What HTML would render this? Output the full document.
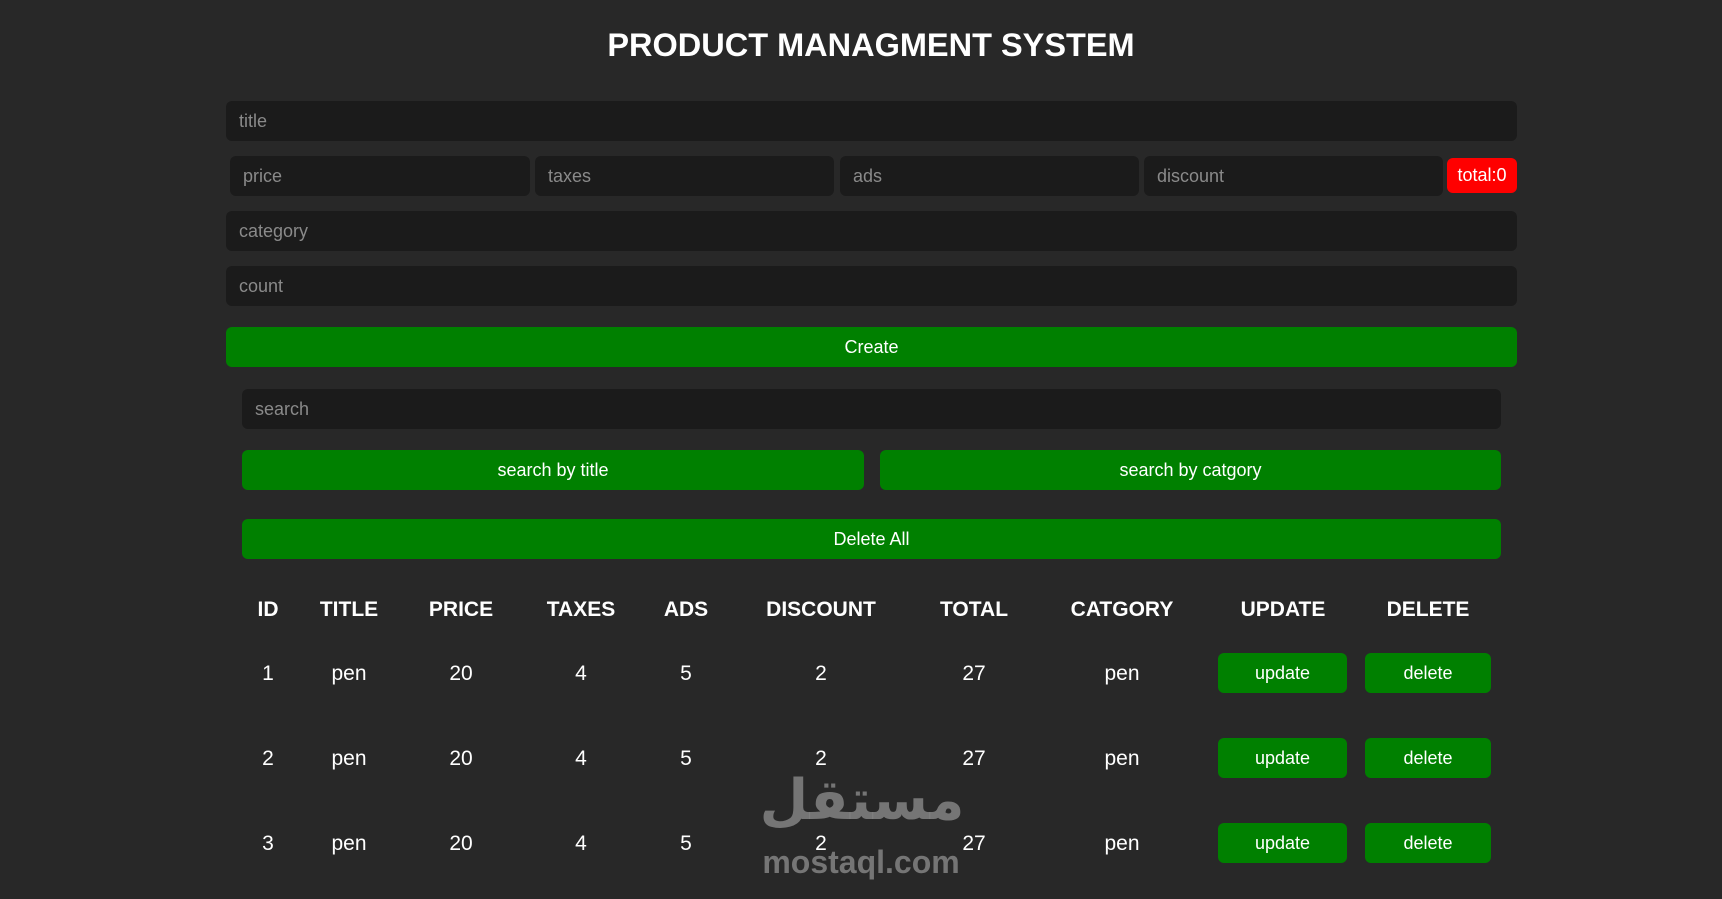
<!DOCTYPE html>
<html><head><meta charset="utf-8"><style>
body{margin:0;width:1722px;height:899px;background:#282828;font-family:"Liberation Sans",Arial,sans-serif;position:relative;overflow:hidden;color:#fff}
.a{position:absolute;box-sizing:border-box}
.in{background:#1b1b1b;border-radius:6px;color:#8a8a8a;font-size:18px;padding-left:13px;display:flex;align-items:center}
.btn{background:#008000;border-radius:6px;color:#fff;font-size:18px;display:flex;align-items:center;justify-content:center}
.c{position:absolute;transform:translateX(-50%);font-size:21px;white-space:nowrap}
.h{font-weight:bold;font-size:21px}
</style></head><body>
<div class="a" style="left:10px;width:1722px;top:27px;text-align:center;font-weight:bold;font-size:32.5px">PRODUCT MANAGMENT SYSTEM</div>
<div class="a in" style="left:226px;width:1291px;top:101px;height:40px">title</div>
<div class="a in" style="left:230px;width:300px;top:156px;height:40px">price</div>
<div class="a in" style="left:535px;width:299px;top:156px;height:40px">taxes</div>
<div class="a in" style="left:840px;width:299px;top:156px;height:40px">ads</div>
<div class="a in" style="left:1144px;width:299px;top:156px;height:40px">discount</div>
<div class="a btn" style="left:1447px;width:70px;top:158px;height:35px;background:#f00;font-size:18px">total:0</div>
<div class="a in" style="left:226px;width:1291px;top:211px;height:40px">category</div>
<div class="a in" style="left:226px;width:1291px;top:266px;height:40px">count</div>
<div class="a btn" style="left:226px;width:1291px;top:327px;height:40px">Create</div>
<div class="a in" style="left:242px;width:1259px;top:389px;height:40px">search</div>
<div class="a btn" style="left:242px;width:622px;top:450px;height:40px">search by title</div>
<div class="a btn" style="left:880px;width:621px;top:450px;height:40px">search by catgory</div>
<div class="a btn" style="left:242px;width:1259px;top:519px;height:40px">Delete All</div>
<div class="c h" style="left:268px;top:598px">ID</div>
<div class="c h" style="left:349px;top:598px">TITLE</div>
<div class="c h" style="left:461px;top:598px">PRICE</div>
<div class="c h" style="left:581px;top:598px">TAXES</div>
<div class="c h" style="left:686px;top:598px">ADS</div>
<div class="c h" style="left:821px;top:598px">DISCOUNT</div>
<div class="c h" style="left:974px;top:598px">TOTAL</div>
<div class="c h" style="left:1122px;top:598px">CATGORY</div>
<div class="c h" style="left:1283px;top:598px">UPDATE</div>
<div class="c h" style="left:1428px;top:598px">DELETE</div>
<div class="c" style="left:268px;top:662px">1</div><div class="c" style="left:349px;top:662px">pen</div><div class="c" style="left:461px;top:662px">20</div><div class="c" style="left:581px;top:662px">4</div><div class="c" style="left:686px;top:662px">5</div><div class="c" style="left:821px;top:662px">2</div><div class="c" style="left:974px;top:662px">27</div><div class="c" style="left:1122px;top:662px">pen</div>
<div class="a btn" style="left:1218px;width:129px;top:653px;height:40px">update</div><div class="a btn" style="left:1365px;width:126px;top:653px;height:40px">delete</div>
<div class="c" style="left:268px;top:747px">2</div><div class="c" style="left:349px;top:747px">pen</div><div class="c" style="left:461px;top:747px">20</div><div class="c" style="left:581px;top:747px">4</div><div class="c" style="left:686px;top:747px">5</div><div class="c" style="left:821px;top:747px">2</div><div class="c" style="left:974px;top:747px">27</div><div class="c" style="left:1122px;top:747px">pen</div>
<div class="a btn" style="left:1218px;width:129px;top:738px;height:40px">update</div><div class="a btn" style="left:1365px;width:126px;top:738px;height:40px">delete</div>
<div class="c" style="left:268px;top:832px">3</div><div class="c" style="left:349px;top:832px">pen</div><div class="c" style="left:461px;top:832px">20</div><div class="c" style="left:581px;top:832px">4</div><div class="c" style="left:686px;top:832px">5</div><div class="c" style="left:821px;top:832px">2</div><div class="c" style="left:974px;top:832px">27</div><div class="c" style="left:1122px;top:832px">pen</div>
<div class="a btn" style="left:1218px;width:129px;top:823px;height:40px">update</div><div class="a btn" style="left:1365px;width:126px;top:823px;height:40px">delete</div>
<div class="c" style="left:862px;top:772px;font-size:56px;font-weight:bold;color:rgba(130,130,130,0.85);font-family:'Liberation Sans','DejaVu Sans',sans-serif;line-height:1">مستقل</div>
<div class="c" style="left:861px;top:846px;font-size:32px;font-weight:bold;color:rgba(130,130,130,0.85);line-height:1">mostaql.com</div>
</body></html>
